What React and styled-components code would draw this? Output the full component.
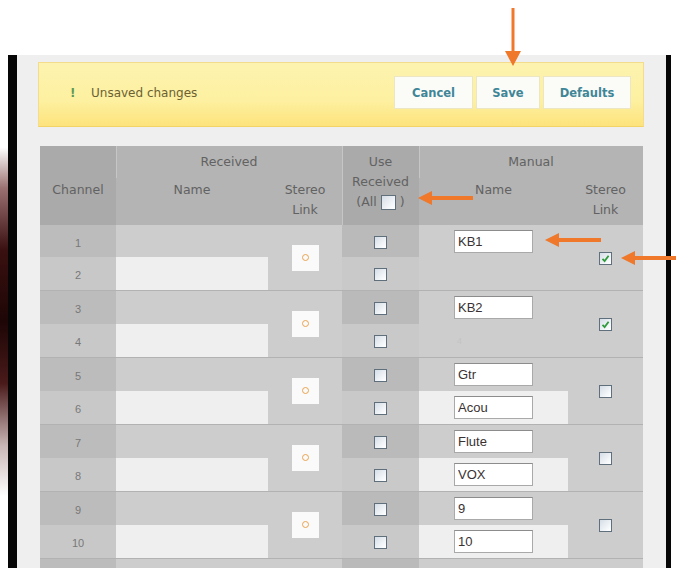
import React from 'react'
import styled, { createGlobalStyle } from 'styled-components'

const GlobalStyle = createGlobalStyle`
  html, body {
    margin: 0;
    padding: 0;
    background: #fff;
  }
  body {
    font-family: "DejaVu Sans", Verdana, sans-serif;
  }
`

const Page = styled.div`
  position: relative;
  width: 676px;
  height: 568px;
  overflow: hidden;
  background: #fff;
`

const TopSpace = styled.div`
  height: 55px;
`

const Stage = styled.div`
  display: flex;
  height: 513px;
`

const Edge = styled.div`
  width: 8px;
  background: linear-gradient(180deg, #fff 0%, #fff 18%, #9a7070 26%, #3a1010 38%, #1e0606 52%, #4a1a1a 64%, #c8b4b4 76%, #fff 86%);
`

const Frame = styled.div`
  width: 649px;
  border-left: 9px solid #060606;
  border-right: 5px solid #060606;
  background: #efefef;
  padding-top: 7px;
  overflow: hidden;
`

const Notice = styled.div`
  margin-left: 21px;
  width: 606px;
  height: 65px;
  box-sizing: border-box;
  display: flex;
  align-items: center;
  padding: 0 12px 4px 31px;
  background: linear-gradient(180deg, #fdf3b0 0%, #fdf0a0 60%, #fde37c 100%);
  border: 1px solid #f3dd8c;
  border-bottom-color: #f3d266;
`

const Bang = styled.span`
  color: #5f9a55;
  font-size: 12px;
  font-weight: bold;
  width: 21px;
`

const NoticeText = styled.span`
  flex: 1;
  color: #6b6133;
  font-size: 12px;
`

const Buttons = styled.div`
  display: flex;
  gap: 3px;
`

const Button = styled.button`
  width: ${p => p.$w}px;
  height: 33px;
  background: #fbfbf8;
  border: 1px solid #ece6c4;
  color: #3f8697;
  font-family: "DejaVu Sans", Verdana, sans-serif;
  font-size: 11.5px;
  font-weight: bold;
  padding: 0;
`

const Table = styled.table`
  margin: 19px 0 0 23px;
  width: 603px;
  border-collapse: collapse;
  table-layout: fixed;
`

const HeadRow = styled.tr`
  height: ${p => p.$h}px;
`

const Th = styled.th`
  padding: ${p => p.$pt || 0}px 0 0;
  vertical-align: ${p => p.$va || 'top'};
  background: ${p => (p.$dark ? '#aaaaaa' : '#b4b4b4')};
  box-shadow: ${p => (p.$line ? 'inset 1px 0 0 #c6c6c6' : 'none')};
  color: #626262;
  font-size: 12.5px;
  font-weight: normal;
  line-height: 20px;
  text-align: center;
`

const AllBox = styled.span`
  display: inline-flex;
  align-items: center;
  gap: 4px;
`

const Tr = styled.tr`
  height: ${p => p.$h}px;
`

const Td = styled.td`
  padding: 0;
  text-align: ${p => p.$align || 'center'};
  vertical-align: middle;
  background: ${p => p.$bg};
  box-shadow: ${p => (p.$sep ? 'inset 0 1px 0 #b2b2b2' : 'none')};
`

const ChannelNo = styled.span`
  color: #787878;
  font-family: "Liberation Sans", Arial, sans-serif;
  font-size: 11px;
`

const LinkSquare = styled.div`
  width: 27px;
  height: 26px;
  margin: 0 auto;
  background: #fafafa;
  display: flex;
  align-items: center;
  justify-content: center;
`

const Ring = styled.span`
  width: 5px;
  height: 5px;
  border-radius: 50%;
  border: 1.5px solid #e8a450;
`

const Box = styled.span`
  display: inline-flex;
  align-items: center;
  justify-content: center;
  box-sizing: border-box;
  width: ${p => p.$size || 13}px;
  height: ${p => p.$size || 13}px;
  border: 1px solid #5f6f7c;
  background: linear-gradient(135deg, #d5dde6 0%, #f4f7fa 70%, #ffffff 100%);
  vertical-align: middle;
`

const NameInput = styled.input`
  display: block;
  margin-left: 35px;
  width: 79px;
  height: 23px;
  box-sizing: border-box;
  border: 1px solid #a9a9a9;
  border-top-color: #8c8c8c;
  background: #fff;
  padding: 0 3px;
  color: #3a3232;
  font-family: "Liberation Sans", Arial, sans-serif;
  font-size: 13px;
`

const Ghost = styled.span`
  display: block;
  margin-left: 38px;
  color: #c4c4c4;
  font-family: "Liberation Sans", Arial, sans-serif;
  font-size: 9px;
`

const Overlay = styled.svg`
  position: absolute;
  left: 0;
  top: 0;
  pointer-events: none;
`

function Check({ checked, size }) {
  return (
    <Box $size={size}>
      {checked && (
        <svg width="9" height="9" viewBox="0 0 9 9">
          <path d="M1.5 4.8 L3.6 7 L7.6 1.8" fill="none" stroke="#2f9a3c" strokeWidth="1.8" />
        </svg>
      )}
    </Box>
  )
}

const pairs = [
  { a: 'KB1', b: null, link: true },
  { a: 'KB2', b: 'ghost', link: true },
  { a: 'Gtr', b: 'Acou', link: false },
  { a: 'Flute', b: 'VOX', link: false },
  { a: '9', b: '10', link: false },
  { a: null, b: null, link: false, tail: true },
]

function Arrow({ tip, tail, y }) {
  return (
    <g fill="#ef782a" stroke="#ef782a">
      <line x1={tip + 12} y1={y} x2={tail} y2={y} strokeWidth="4" />
      <polygon points={`${tip},${y} ${tip + 14},${y - 7} ${tip + 14},${y + 7}`} stroke="none" />
    </g>
  )
}

export default function App() {
  return (
    <Page>
      <GlobalStyle />
      <TopSpace />
      <Stage>
        <Edge />
        <Frame>
          <Notice>
            <Bang>!</Bang>
            <NoticeText>Unsaved changes</NoticeText>
            <Buttons>
              <Button $w={79}>Cancel</Button>
              <Button $w={64}>Save</Button>
              <Button $w={88}>Defaults</Button>
            </Buttons>
          </Notice>

          <Table>
            <colgroup>
              <col style={{ width: 76 }} />
              <col style={{ width: 152 }} />
              <col style={{ width: 74 }} />
              <col style={{ width: 77 }} />
              <col style={{ width: 149 }} />
              <col style={{ width: 75 }} />
            </colgroup>
            <thead>
              <HeadRow $h={32}>
                <Th rowSpan={2} $dark $va="middle" $pt={9}>Channel</Th>
                <Th colSpan={2} $va="middle" $line>Received</Th>
                <Th rowSpan={2} $dark $line $pt={6}>
                  Use<br />Received<br />
                  <AllBox>(All <Check size={15} />)</AllBox>
                </Th>
                <Th colSpan={2} $va="middle" $line>Manual</Th>
              </HeadRow>
              <HeadRow $h={47}>
                <Th $pt={2}>Name</Th>
                <Th $pt={2}>Stereo<br />Link</Th>
                <Th $pt={2}>Name</Th>
                <Th $pt={2}>Stereo<br />Link</Th>
              </HeadRow>
            </thead>
            <tbody>
              {pairs.map((p, i) => {
                const n = i * 2 + 1
                const first = i === 0
                return (
                  <React.Fragment key={n}>
                    <Tr $h={first ? 32 : 34}>
                      <Td $bg="#bcbcbc" $sep={!first}>{!p.tail && <ChannelNo>{n}</ChannelNo>}</Td>
                      <Td $bg="#cdcdcd" $sep={!first} />
                      <Td rowSpan={2} $bg="#cdcdcd" $sep={!first}>
                        {!p.tail && <LinkSquare><Ring /></LinkSquare>}
                      </Td>
                      <Td $bg="#bababa" $sep={!first}>{!p.tail && <Check />}</Td>
                      <Td $bg="#cdcdcd" $align="left" $sep={!first}>
                        {p.a !== null && <NameInput defaultValue={p.a} />}
                      </Td>
                      <Td rowSpan={2} $bg="#cdcdcd" $sep={!first}>
                        {!p.tail && <Check checked={p.link} />}
                      </Td>
                    </Tr>
                    <Tr $h={33}>
                      <Td $bg="#c8c8c8">{!p.tail && <ChannelNo>{n + 1}</ChannelNo>}</Td>
                      <Td $bg="#efefef" />
                      <Td $bg="#c9c9c9">{!p.tail && <Check />}</Td>
                      <Td $bg={p.link ? '#cdcdcd' : '#efefef'} $align="left">
                        {p.b === 'ghost' && <Ghost>4</Ghost>}
                        {p.b !== null && p.b !== 'ghost' && <NameInput defaultValue={p.b} />}
                      </Td>
                    </Tr>
                  </React.Fragment>
                )
              })}
            </tbody>
          </Table>
        </Frame>
      </Stage>

      <Overlay width="676" height="568">
        <g fill="#ef782a" stroke="#ef782a">
          <line x1="513" y1="8" x2="513" y2="54" strokeWidth="3" />
          <polygon points="505,51 521,51 513,66" stroke="none" />
        </g>
        <Arrow tip={418} tail={473} y={198} />
        <Arrow tip={545} tail={601} y={240} />
        <Arrow tip={621} tail={676} y={258} />
      </Overlay>
    </Page>
  )
}
